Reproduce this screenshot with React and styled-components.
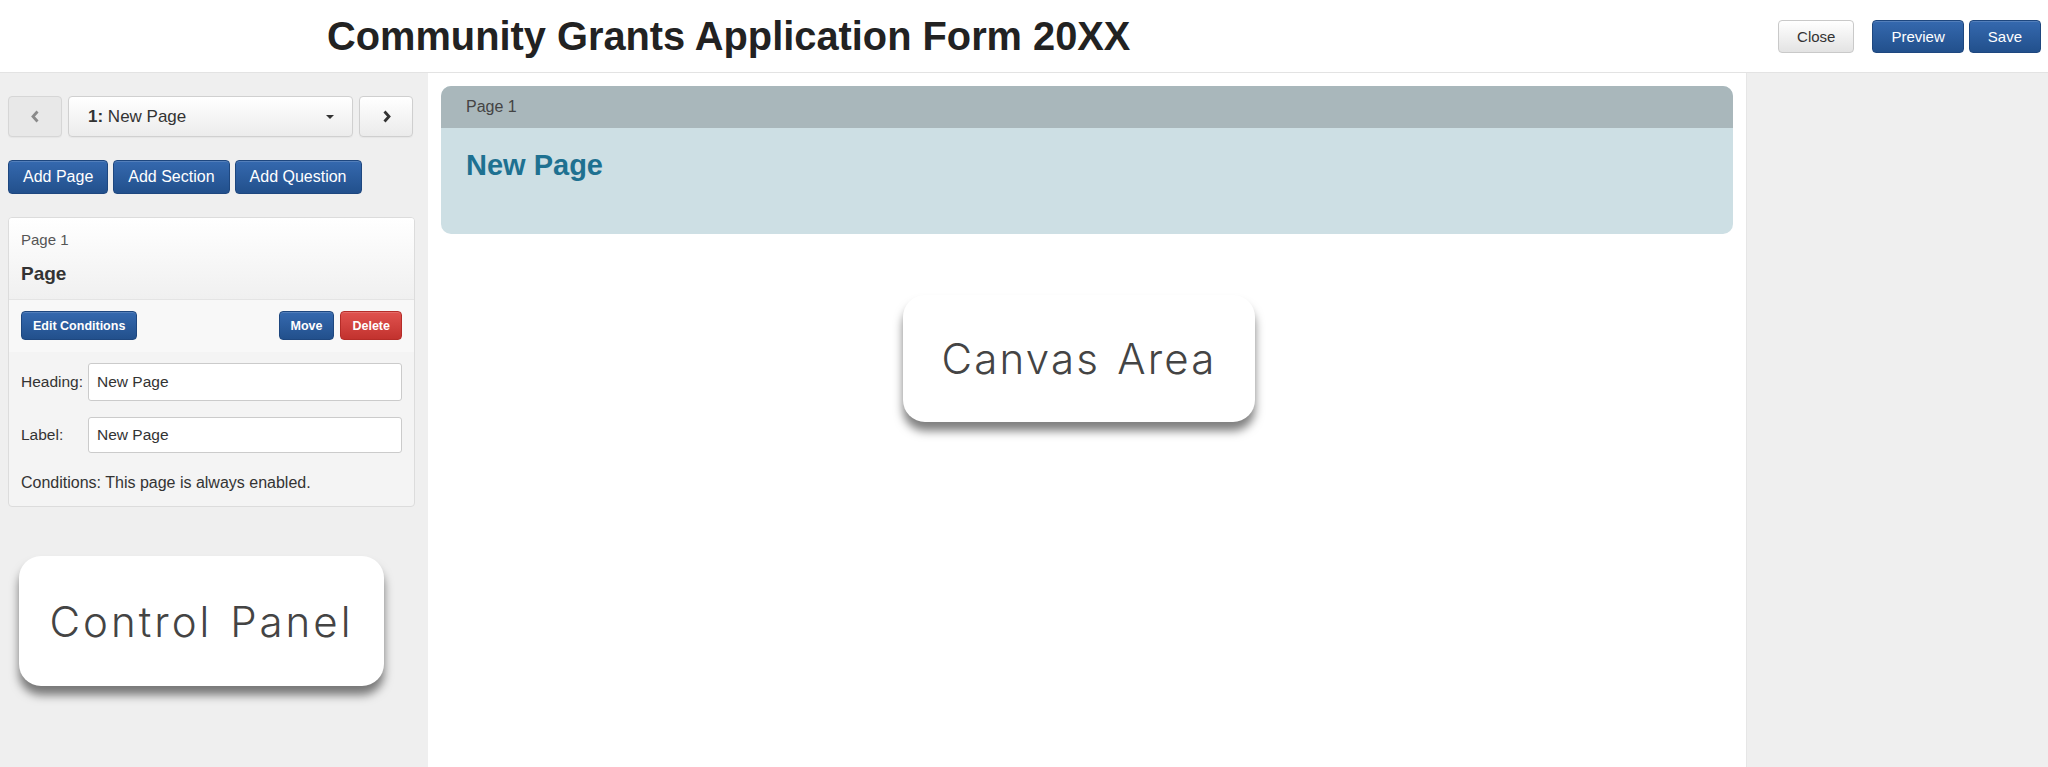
import React from 'react';
import styled, { createGlobalStyle, css } from 'styled-components';

const GlobalStyle = createGlobalStyle`
  html, body { margin: 0; padding: 0; }
  body {
    font-family: "Liberation Sans", Arial, Helvetica, sans-serif;
    color: #333;
    background: #fff;
  }
  * { box-sizing: border-box; }
`;

const Page = styled.div`
  display: flex;
  flex-direction: column;
  height: 767px;
  min-height: 100vh;
  overflow: hidden;
`;

const Header = styled.header`
  flex: none;
  height: 73px;
  display: flex;
  align-items: center;
  padding: 0 7px 0 327px;
  border-bottom: 1px solid #e3e3e3;
  background: #fff;
`;

const Title = styled.h1`
  flex: 1;
  margin: 0;
  font-size: 39.8px;
  font-weight: 700;
  color: #222;
  white-space: nowrap;
`;

const HeaderActions = styled.div`
  display: flex;
  align-items: center;
  gap: 18px;
`;

const ButtonGroup = styled.div`
  display: flex;
  align-items: center;
  gap: ${(p) => p.$gap || 5}px;
`;

const variants = {
  primary: css`
    color: #fff;
    background: linear-gradient(#3569af, #22508c);
    border: 1px solid #1e477f;
    box-shadow: inset 0 1px 0 rgba(255, 255, 255, 0.15);
  `,
  danger: css`
    color: #fff;
    background: linear-gradient(#e0524e, #c2322e);
    border: 1px solid #b52c28;
    box-shadow: inset 0 1px 0 rgba(255, 255, 255, 0.15);
  `,
  default: css`
    color: #333;
    background: linear-gradient(#ffffff, #e3e3e3);
    border: 1px solid #c9c9c9;
  `,
};

const sizes = {
  lg: css`
    height: 33px;
    padding: 0 18px;
    font-size: 15px;
  `,
  md: css`
    height: 34px;
    padding: 0 14px;
    font-size: 16px;
  `,
  sm: css`
    height: 29px;
    padding: 0 11px;
    font-size: 12.5px;
    font-weight: 700;
  `,
};

const Button = styled.button`
  display: inline-flex;
  align-items: center;
  justify-content: center;
  font-family: inherit;
  border-radius: 4px;
  white-space: nowrap;
  cursor: pointer;
  ${(p) => variants[p.$variant || 'primary']}
  ${(p) => sizes[p.$size || 'md']}
`;

const Body = styled.div`
  flex: 1;
  min-height: 0;
  display: grid;
  grid-template-columns: 428px 1fr 302px;
`;

const Sidebar = styled.aside`
  position: relative;
  background: #efefef;
  padding: 23px 13px 0 8px;
`;

const NavRow = styled.div`
  display: flex;
  gap: 6px;
  height: 41px;
  padding-right: 2px;
`;

const NavButton = styled.button`
  flex: none;
  width: 54px;
  height: 41px;
  display: flex;
  align-items: center;
  justify-content: center;
  border-radius: 4px;
  cursor: pointer;
  color: ${(p) => (p.$disabled ? '#8a8a8a' : '#333')};
  border: 1px solid ${(p) => (p.$disabled ? '#d6d6d6' : '#cfcfcf')};
  background: ${(p) =>
    p.$disabled ? '#e8e8e8' : 'linear-gradient(#ffffff, #ebebeb)'};
  box-shadow: 0 1px 1px rgba(0, 0, 0, 0.04);
`;

const PageSelect = styled.div`
  flex: 1;
  height: 41px;
  display: flex;
  align-items: center;
  justify-content: space-between;
  padding: 0 18px 0 19px;
  border: 1px solid #d0d0d0;
  border-radius: 4px;
  background: linear-gradient(#ffffff, #ececec);
  font-size: 17px;
  color: #333;
  box-shadow: 0 1px 1px rgba(0, 0, 0, 0.04);
`;

const Caret = styled.span`
  width: 0;
  height: 0;
  border-left: 4px solid transparent;
  border-right: 4px solid transparent;
  border-top: 4px solid #333;
`;

const AddRow = styled.div`
  display: flex;
  gap: 5px;
  margin-top: 23px;
`;

const Card = styled.section`
  margin-top: 23px;
  border: 1px solid #dcdcdc;
  border-radius: 4px;
  background: #f4f4f4;
  overflow: hidden;
`;

const CardHeader = styled.div`
  padding: 13px 12px 14px 12px;
  background: linear-gradient(#ffffff, #f0f0f0);
  border-bottom: 1px solid #e4e4e4;
`;

const CardKicker = styled.div`
  font-size: 15px;
  line-height: 18px;
  color: #555;
`;

const CardTitle = styled.div`
  margin-top: 14px;
  font-size: 19px;
  line-height: 22px;
  font-weight: 700;
  color: #333;
`;

const ActionRow = styled.div`
  display: flex;
  justify-content: space-between;
  align-items: center;
  padding: 11px 12px 12px;
  background: #f8f8f8;
`;

const FormArea = styled.div`
  padding: 11px 12px 14px;
  display: flex;
  flex-direction: column;
  gap: 16px;
`;

const FieldRow = styled.label`
  display: flex;
  align-items: center;
`;

const FieldLabel = styled.span`
  width: 67px;
  flex: none;
  font-size: 15.5px;
  color: #333;
`;

const TextInput = styled.input`
  flex: 1;
  min-width: 0;
  height: ${(p) => p.$h || 36}px;
  padding: 0 8px;
  border: 1px solid #cbcbcb;
  border-radius: 3px;
  background: #fff;
  font-family: inherit;
  font-size: 15.5px;
  color: #333;
  outline: none;
`;

const ConditionsText = styled.div`
  margin-top: 5px;
  font-size: 16px;
  line-height: 18px;
  color: #333;
`;

const Canvas = styled.main`
  position: relative;
  background: #fff;
  padding: 13px;
`;

const PageCard = styled.section`
  height: 148px;
  border-radius: 10px;
  background: #cddfe4;
  overflow: hidden;
`;

const PageCardHeader = styled.div`
  height: 42px;
  display: flex;
  align-items: center;
  padding: 0 25px;
  background: #a9b7bb;
  font-size: 16px;
  color: #444;
`;

const PageCardTitle = styled.h2`
  margin: 20px 25px 0;
  font-size: 29px;
  line-height: 34px;
  font-weight: 700;
  color: #1e7191;
`;

const RightRail = styled.aside`
  background: #efefef;
  border-left: 1px solid #e6e6e6;
`;

const Callout = styled.div`
  position: absolute;
  left: ${(p) => p.$left}px;
  top: ${(p) => p.$top}px;
  width: ${(p) => p.$width}px;
  height: ${(p) => p.$height}px;
  display: flex;
  align-items: center;
  justify-content: center;
  background: #fff;
  border-radius: 22px;
  box-shadow: 0 9px 10px rgba(0, 0, 0, 0.5);
  font-family: Inter, "Open Sans", sans-serif;
  font-weight: 300;
  font-size: 42px;
  letter-spacing: ${(p) => p.$tracking}px;
  word-spacing: 3px;
  color: #444;
  white-space: nowrap;
`;

const Chevron = ({ dir }) => (
  <svg width="9" height="13" viewBox="0 0 9 13" aria-hidden="true">
    <path
      d={dir === 'left' ? 'M6.5 1.5 L2 6.5 L6.5 11.5' : 'M2.5 1.5 L7 6.5 L2.5 11.5'}
      fill="none"
      stroke="currentColor"
      strokeWidth="2.8"
    />
  </svg>
);

export default function App() {
  return (
    <>
      <GlobalStyle />
      <Page>
        <Header>
          <Title>Community Grants Application Form 20XX</Title>
          <HeaderActions>
            <Button $variant="default" $size="lg">Close</Button>
            <ButtonGroup $gap={5}>
              <Button $size="lg">Preview</Button>
              <Button $size="lg">Save</Button>
            </ButtonGroup>
          </HeaderActions>
        </Header>
        <Body>
          <Sidebar>
            <NavRow>
              <NavButton $disabled aria-label="Previous page">
                <Chevron dir="left" />
              </NavButton>
              <PageSelect>
                <span>
                  <b>1:</b> New Page
                </span>
                <Caret />
              </PageSelect>
              <NavButton aria-label="Next page">
                <Chevron dir="right" />
              </NavButton>
            </NavRow>
            <AddRow>
              <Button>Add Page</Button>
              <Button>Add Section</Button>
              <Button>Add Question</Button>
            </AddRow>
            <Card>
              <CardHeader>
                <CardKicker>Page 1</CardKicker>
                <CardTitle>Page</CardTitle>
              </CardHeader>
              <ActionRow>
                <Button $size="sm">Edit Conditions</Button>
                <ButtonGroup $gap={6}>
                  <Button $size="sm">Move</Button>
                  <Button $size="sm" $variant="danger">Delete</Button>
                </ButtonGroup>
              </ActionRow>
              <FormArea>
                <FieldRow>
                  <FieldLabel>Heading:</FieldLabel>
                  <TextInput $h={38} defaultValue="New Page" />
                </FieldRow>
                <FieldRow>
                  <FieldLabel>Label:</FieldLabel>
                  <TextInput $h={36} defaultValue="New Page" />
                </FieldRow>
                <ConditionsText>Conditions: This page is always enabled.</ConditionsText>
              </FormArea>
            </Card>
            <Callout $left={19} $top={483} $width={365} $height={130} $tracking={3}>
              Control Panel
            </Callout>
          </Sidebar>
          <Canvas>
            <PageCard>
              <PageCardHeader>Page 1</PageCardHeader>
              <PageCardTitle>New Page</PageCardTitle>
            </PageCard>
            <Callout $left={475} $top={222} $width={352} $height={127} $tracking={2.2}>
              Canvas Area
            </Callout>
          </Canvas>
          <RightRail />
        </Body>
      </Page>
    </>
  );
}
